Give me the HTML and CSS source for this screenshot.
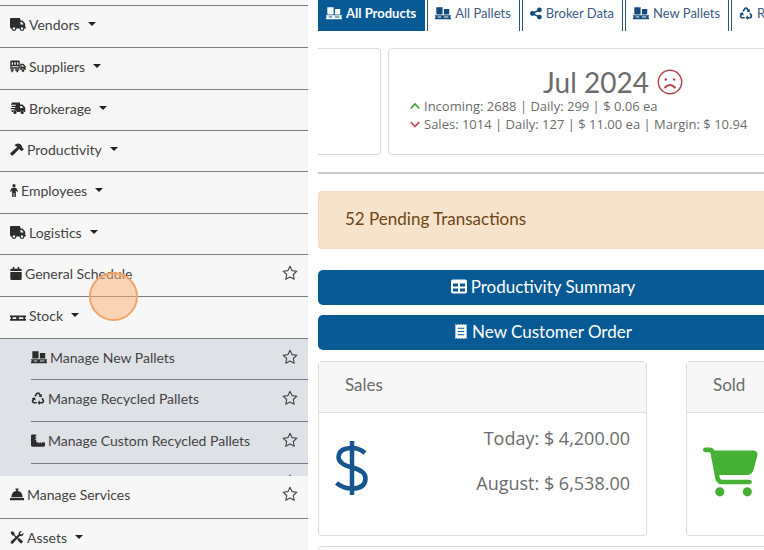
FILE: index.html
```html
<!DOCTYPE html>
<html lang="en">
<head>
<meta charset="utf-8">
<meta name="viewport" content="width=device-width, initial-scale=1">
<title>Dashboard</title>
<link rel="stylesheet" href="styles.css">
</head>
<body>
<svg class="sprite" aria-hidden="true">
  <symbol id="truck" viewBox="0 0 640 512"><path d="M48 0C21.500 0 0 21.500 0 48V368c0 26.500 21.500 48 48 48H64c0 53 43 96 96 96s96-43 96-96H384c0 53 43 96 96 96s96-43 96-96h32c17.700 0 32-14.300 32-32s-14.300-32-32-32V237.300c0-17-6.700-33.300-18.700-45.300L512 114.700c-12-12-28.300-18.700-45.300-18.700H416V48c0-26.500-21.500-48-48-48H48zM416 160h50.700L544 237.300V256H416V160zM112 416a48 48 0 1 1 96 0 48 48 0 1 1-96 0zm368-48a48 48 0 1 1 0 96 48 48 0 1 1 0-96z"/></symbol>
  <symbol id="supply" viewBox="0 0 640 512"><path fill-rule="evenodd" d="M50 20H350Q390 20 390 60V350H10V60Q10 20 50 20zM70 90V190H120V90zM170 90V190H230V90zM280 90V190H335V90zM60 250V290H340V250zM410 150H530L625 250V400H585a65 65 0 0 0-130 0H410zM460 200V270H560L505 200zM30 370H150V430H110V490H60V430H30zM210 370H370V430H320V490H260V430H210zM520 365a55 55 0 1 1 0 110 55 55 0 1 1 0-110z"/></symbol>
  <symbol id="broker" viewBox="0 0 640 512"><path fill-rule="evenodd" d="M80 20H400V100H500L610 215V400H570a85 85 0 0 0-165 0H285a85 85 0 0 0-165 0H65V330H180V285H30V240H210V195H60V150H230V105H40V60H80zM405 155V235H535L465 155zM200 350a65 65 0 1 1 0 130 65 65 0 1 1 0-130zM487 350a65 65 0 1 1 0 130 65 65 0 1 1 0-130z"/></symbol>
  <symbol id="hammer" viewBox="0 0 16 14"><path d="M5 2Q8-1 12 1L14 3.500V5L16 6.500 13.500 9 11.500 7.500 10.500 6.500 3.500 13.500Q2 14.500.800 13 0 11.500 1.200 10.500L8.300 4.200Q7 2.500 5 2z"/></symbol>
  <symbol id="person" viewBox="0 0 10 16"><circle cx="5" cy="2" r="2"/><path d="M3.500 4.500h3Q7.500 4.500 8.200 5.500L10 9 8.700 10 7.300 7.800V16H5.500V11h-1v5H2.700V7.800L1.300 10 0 9 1.800 5.500Q2.500 4.500 3.500 4.500z"/></symbol>
  <symbol id="calendar" viewBox="0 0 14 16"><path d="M3 0h2v2h4V0h2v2h1.500Q14 2 14 3.500V5H0V3.500Q0 2 1.500 2H3zM0 6h14v8.500q0 1.500-1.500 1.500h-11Q0 16 0 14.500z"/></symbol>
  <symbol id="pallet" viewBox="0 0 18 14"><path d="M0 7h18v2h-1v2h1v2H0v-2h1V9H0zM3 9v2h4V9zM10 9v2h5V9z" fill-rule="evenodd"/></symbol>
  <symbol id="pallets" viewBox="0 0 18 14"><path d="M1.500 0h7v8h-7zM10 2h6v6h-6zM0 9h18v1.500h-1v1h1V13.500H0v-2h1v-1H0zM3 10.500v1h4v-1zM10 10.500v1h5v-1z" fill-rule="evenodd"/></symbol>
  <symbol id="recycle" viewBox="0 0 16 16"><g fill="none" stroke="currentColor" stroke-width="2"><path d="M4.500 5.200 6.600 1.800Q8 .600 9.300 1.800L11 4.500M13 7.700l1.600 2.800Q15 12.800 13 13.200H9.500M6.300 13.200H3Q.800 12.700 1.500 10.500L2.700 8.300"/></g><path d="M12.600 2.200v4.300L8.500 5.400zM10.300 10.300v5.700L7.300 13.200zM0 7.800 4.300 6.600 5.300 10.800z"/></symbol>
  <symbol id="ruler" viewBox="0 0 16 14"><path d="M1.500 0H5Q6 0 6 1v1.500H4.500v1H6v2H4.500v1H6V9h2.500v1h1.300V9h1.500v1h1.300V9H15q1 0 1 1v2.500q0 1.500-1.500 1.500h-13Q0 14 0 12.500v-11Q0 0 1.500 0z"/></symbol>
  <symbol id="bell" viewBox="0 0 16 14"><path d="M6.200 0h3.600v1.500H9V3q5 .700 5.500 7h-13Q2 3.700 7 3V1.500h-.800zM0 11h16v2.500H0z"/></symbol>
  <symbol id="tools" viewBox="0 0 16 16"><path d="M0 2 2 0 5 2.500V4.500L7.300 6.800 10 4Q9.500 1 12.500 0l1.500.200L11.800 2.500 12 4l1.500.300L15.800 2Q16.800 6 12.800 6.500L11.500 6.300 9.300 8.500 10 9.200h1.500L15.500 13 13 15.700 9 11.700V10.200L8 9.700 3.200 15Q1.500 16.500.300 14.700-.200 13.200 1.200 12L6 8 3.800 5.500H2.300z"/></symbol>
  <symbol id="star" viewBox="0 0 16 16"><path fill="none" stroke="currentColor" stroke-width="1.100" stroke-linejoin="round" d="M8 1.200 10 5.600 14.900 6.200 11.300 9.500 12.200 14.300 8 12 3.800 14.300 4.700 9.500 1.100 6.200 6 5.600z"/></symbol>
  <symbol id="share" viewBox="0 0 14 14"><path d="M3 7 11 2.800M3 7l8 4.200" stroke="currentColor" stroke-width="1.700"/><circle cx="2.800" cy="7" r="2.800"/><circle cx="11" cy="2.800" r="2.800"/><circle cx="11" cy="11.200" r="2.800"/></symbol>
  <symbol id="sad" viewBox="0 0 26 26"><g fill="none" stroke="currentColor" stroke-width="1.500"><circle cx="13" cy="13" r="11.700"/><path d="M7.500 19q5.500-6 11 0" stroke-width="2"/></g><circle cx="8.800" cy="10.500" r="1.200"/><circle cx="17.200" cy="10.500" r="1.200"/></symbol>
  <symbol id="up" viewBox="0 0 10 10"><path fill="none" stroke="currentColor" stroke-width="1.600" d="M.700 7.500 5 3l4.300 4.500"/></symbol>
  <symbol id="down" viewBox="0 0 10 10"><path fill="none" stroke="currentColor" stroke-width="1.600" d="M.700 3 5 7.500 9.300 3"/></symbol>
  <symbol id="table" viewBox="0 0 16 14"><path fill-rule="evenodd" d="M2 0h12q2 0 2 2v10q0 2-2 2H2q-2 0-2-2V2Q0 0 2 0zM2 4v3h5V4zM9 4v3h5V4zM2 9v3h5V9zM9 9v3h5V9z"/></symbol>
  <symbol id="receipt" viewBox="0 0 12 16"><path fill-rule="evenodd" d="M0 0 1.500 1 3 0 4.500 1 6 0 7.500 1 9 0l1.500 1L12 0v16l-1.500-1L9 16l-1.500-1L6 16l-1.500-1L3 16l-1.500-1L0 16zM2.500 4v1h7V4zM2.500 7.500v1h7v-1zM2.500 11v1h7v-1z"/></symbol>
  <symbol id="dollar" viewBox="0 0 34 54"><path fill="none" stroke="currentColor" stroke-width="4.500" d="M30 12Q24 7 17 7 4 7 3.500 16 3.500 23 17 26.500 31 30 30.500 38 30 47.500 17 47.500 8 47.500 1.500 42M17 0v54"/></symbol>
  <symbol id="cart" viewBox="0 0 576 512"><path d="M0 24C0 10.700 10.700 0 24 0H69.500c22 0 41.500 12.800 50.600 32h411c26.300 0 45.500 25 38.600 50.400l-41 152.300c-8.500 31.400-37 53.300-69.500 53.300H170.700l5.400 28.500c2.200 11.300 12.100 19.500 23.600 19.500H488c13.300 0 24 10.700 24 24s-10.700 24-24 24H199.700c-34.600 0-64.300-24.600-70.700-58.500L77.400 54.500c-.700-3.800-4-6.500-7.900-6.500H24C10.700 48 0 37.300 0 24zM128 464a48 48 0 1 1 96 0 48 48 0 1 1-96 0zm336-48a48 48 0 1 1 0 96 48 48 0 1 1 0-96z"/></symbol>
</svg>

<div class="layout">
  <nav class="sidebar" aria-label="Main">
    <ul class="menu">
      <li><button class="item toggle"><svg class="icon wide"><use href="#truck"/></svg>Vendors</button></li>
      <li><button class="item toggle"><svg class="icon wide"><use href="#supply"/></svg>Suppliers</button></li>
      <li><button class="item toggle"><svg class="icon wide"><use href="#broker"/></svg>Brokerage</button></li>
      <li><button class="item toggle"><svg class="icon"><use href="#hammer"/></svg>Productivity</button></li>
      <li><button class="item toggle"><svg class="icon slim"><use href="#person"/></svg>Employees</button></li>
      <li><button class="item toggle"><svg class="icon wide"><use href="#truck"/></svg>Logistics</button></li>
      <li class="row"><a class="item" href="#"><svg class="icon small"><use href="#calendar"/></svg>General Schedule</a><button class="fav" aria-label="Favorite General Schedule"><svg><use href="#star"/></svg></button></li>
      <li><button class="item toggle" aria-expanded="true"><svg class="icon wide"><use href="#pallet"/></svg>Stock</button></li>
    </ul>
    <ul class="submenu">
      <li class="row"><a class="item" href="#"><svg class="icon wide"><use href="#pallets"/></svg>Manage New Pallets</a><button class="fav" aria-label="Favorite New Pallets"><svg><use href="#star"/></svg></button></li>
      <li class="row"><a class="item" href="#"><svg class="icon"><use href="#recycle"/></svg>Manage Recycled Pallets</a><button class="fav" aria-label="Favorite Recycled Pallets"><svg><use href="#star"/></svg></button></li>
      <li class="row"><a class="item" href="#"><svg class="icon"><use href="#ruler"/></svg>Manage Custom Recycled Pallets</a><button class="fav" aria-label="Favorite Custom Recycled Pallets"><svg><use href="#star"/></svg></button></li>
      <li class="row"><a class="item" href="#"><svg class="icon wide"><use href="#pallet"/></svg>Manage Stock Pallets</a><button class="fav" aria-label="Favorite Stock Pallets"><svg><use href="#star"/></svg></button></li>
    </ul>
    <ul class="menu after">
      <li class="row"><a class="item" href="#"><svg class="icon"><use href="#bell"/></svg>Manage Services</a><button class="fav" aria-label="Favorite Services"><svg><use href="#star"/></svg></button></li>
      <li><button class="item toggle"><svg class="icon"><use href="#tools"/></svg>Assets</button></li>
    </ul>
    <span class="pointer"></span>
  </nav>

  <main class="main">
    <nav class="tabs" aria-label="Views">
      <a class="tab active" href="#"><svg class="icon wide"><use href="#pallets"/></svg>All Products</a>
      <a class="tab" href="#"><svg class="icon wide"><use href="#pallets"/></svg>All Pallets</a>
      <a class="tab" href="#"><svg class="icon small"><use href="#share"/></svg>Broker Data</a>
      <a class="tab" href="#"><svg class="icon wide"><use href="#pallets"/></svg>New Pallets</a>
      <a class="tab" href="#"><svg class="icon"><use href="#recycle"/></svg>Recycled Pallets</a>
    </nav>

    <section class="months">
      <div class="previous"></div>
      <article class="month">
        <h2>Jul 2024 <svg class="mood"><use href="#sad"/></svg></h2>
        <p><svg class="trend good"><use href="#up"/></svg>Incoming: 2688 | Daily: 299 | $ 0.06 ea</p>
        <p><svg class="trend bad"><use href="#down"/></svg>Sales: 1014 | Daily: 127 | $ 11.00 ea | Margin: $ 10.94</p>
      </article>
    </section>

    <hr class="rule">

    <div class="alert">52 Pending Transactions</div>

    <div class="actions">
      <button class="action"><svg class="icon wide"><use href="#table"/></svg>Productivity Summary</button>
      <button class="action"><svg class="icon"><use href="#receipt"/></svg>New Customer Order</button>
    </div>

    <section class="cards">
      <article class="card">
        <h3>Sales</h3>
        <div class="body">
          <svg class="figure dollar"><use href="#dollar"/></svg>
          <div class="totals"><p>Today: $ 4,200.00</p><p>August: $ 6,538.00</p></div>
        </div>
      </article>
      <article class="card">
        <h3>Sold</h3>
        <div class="body"><svg class="figure cart"><use href="#cart"/></svg></div>
      </article>
    </section>
    <div class="panel"></div>
  </main>
</div>
</body>
</html>
```
FILE: styles.css
```css
* { box-sizing: border-box; }

body {
  margin: 0;
  font-family: Lato, "Open Sans", sans-serif;
  font-size: 14px;
  color: #6c6c6c;
  background: #fff;
}

ul { margin: 0; padding: 0; list-style: none; }
h2, h3, p { margin: 0; font-weight: 400; }
a { color: inherit; text-decoration: none; }
button { font: inherit; color: inherit; border: 0; background: none; padding: 0; text-align: left; }
svg { fill: currentColor; flex: none; }

.sprite { position: absolute; width: 0; height: 0; }

.layout {
  display: grid;
  grid-template-columns: 308px minmax(0, 1fr);
  gap: 10px;
  height: 100vh;
  overflow: hidden;
}

/* Sidebar */
.sidebar { position: relative; padding-top: 5px; background: #f7f7f7; color: #444; }
.menu > li { height: 42px; border-top: 1px solid #7d7d7d; }
.menu > li:nth-child(3n),
.menu > li:nth-child(4) { height: 41px; }
.after > li:first-child { border-top: 0; }
.row { display: flex; align-items: flex-start; }
.item { display: flex; align-items: center; gap: 3px; flex: 1; height: 36px; padding-left: 10px; }
.toggle::after {
  content: "";
  margin-left: 5px;
  border: 4px solid transparent;
  border-top-color: #222;
  border-bottom: 0;
}
.icon { width: 14px; height: 13px; }
.item .icon { color: #2c2c2c; }
.icon.wide { width: 16px; }
.icon.small { width: 12px; }
.icon.slim { width: 8px; }
.fav { display: flex; align-items: center; height: 36px; margin-right: 10px; }
.fav svg { width: 16px; height: 16px; }
.submenu {
  height: 138px;
  padding-left: 31px;
  overflow: hidden;
  border-top: 1px solid #7d7d7d;
  background: #dee1e6;
}
.submenu > li { height: 42px; border-bottom: 1px solid #747a83; }
.submenu > li:first-child { height: 41px; }
.submenu .item { padding-left: 0; }

.pointer {
  position: absolute;
  left: 89px;
  top: 272px;
  width: 49px;
  height: 49px;
  border: 2px solid #f0a468;
  border-radius: 50%;
  background: rgba(250, 176, 116, 0.5);
}

/* Main column */
.main { margin-right: -4px; }
.tabs { display: flex; gap: 2px; overflow: hidden; font-size: 13px; }
.tab {
  display: flex;
  align-items: center;
  gap: 4px;
  flex: none;
  height: 31px;
  padding: 0 8px 5px 7px;
  border: 1px solid #34536c;
  border-width: 0 1px;
  color: #3d5c83;
}
.tab .icon { color: #164a7c; }
.tab.active, .tab.active .icon { color: #fff; }
.tab.active { background: #075a94; border-color: #075a94; font-weight: 700; }

.months { display: flex; gap: 7px; margin-top: 17px; overflow: hidden; }
.previous { flex: 0 0 63px; border: 1px solid #dcdcdc; border-left: 0; border-radius: 0 4px 4px 0; }
.month {
  flex: 0 0 100%;
  height: 107px;
  padding: 18px 21px;
  border: 1px solid #dcdcdc;
  border-radius: 4px;
}
.month h2 { display: flex; align-items: center; justify-content: center; gap: 8px; font-size: 28px; line-height: 30px; }
.month p { display: flex; align-items: center; gap: 4px; font-family: "Open Sans", sans-serif; font-size: 13px; line-height: 18px; white-space: nowrap; }
.mood { width: 26px; height: 26px; color: #b5464f; }
.trend { width: 10px; height: 10px; }
.good { color: #35a035; }
.bad { color: #c0444b; }

.rule { margin: 17px 0; border: 0; border-top: 2px solid #c9c9c9; }
.alert {
  padding: 15px 26px 17px;
  border: 1px solid #efdcc2;
  border-radius: 4px;
  background: #f5e3cb;
  color: #6e4516;
  font-size: 17px;
  line-height: 24px;
}
.actions { display: grid; gap: 10px; margin: 21px 0 11px; }
.action {
  display: flex;
  align-items: center;
  justify-content: center;
  gap: 4px;
  height: 35px;
  padding-bottom: 3px;
  border-radius: 5px;
  background: #075a94;
  color: #fff;
  font-size: 17px;
}
.action .icon { height: 15px; }

.cards { display: grid; grid-template-columns: repeat(2, minmax(329px, 1fr)); gap: 39px; overflow: hidden; }
.card { height: 175px; border: 1px solid #dcdcdc; border-radius: 4px; }
.card h3 { padding: 11px 26px 15px; border-bottom: 1px solid #dcdcdc; background: #f7f7f7; font-size: 17px; line-height: 24px; }
.body { display: flex; justify-content: space-between; padding: 3px 16px 0; }
.figure { margin-top: 25px; }
.dollar { width: 34px; height: 54px; color: #17568f; }
.cart { width: 55px; height: 50px; margin-top: 31px; color: #46b035; }
.totals { font-family: "Open Sans", sans-serif; font-size: 18px; line-height: 45px; text-align: right; }
.panel { height: 40px; margin-top: 10px; border: 1px solid #dcdcdc; border-radius: 4px; }
```
